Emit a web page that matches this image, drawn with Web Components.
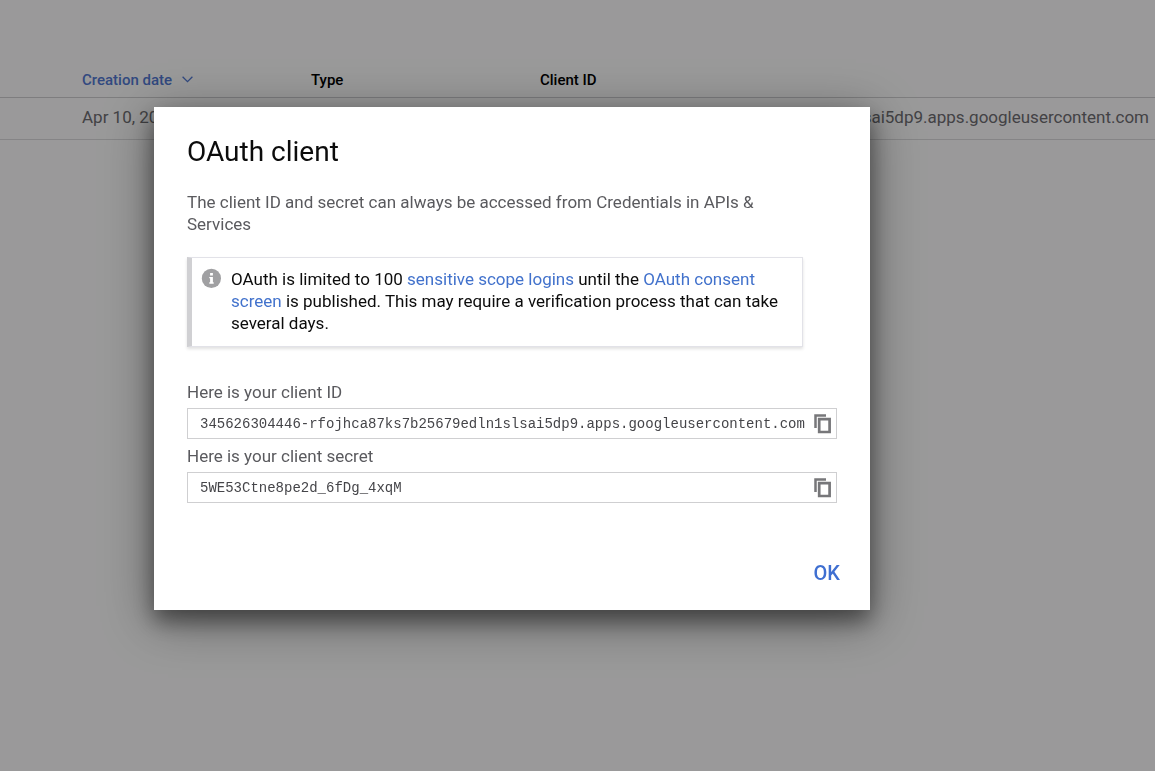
<!DOCTYPE html>
<html lang="en">
<head>
<meta charset="utf-8">
<meta name="viewport" content="width=device-width, initial-scale=1">
<title>OAuth client</title>
<style>
  html, body { margin: 0; height: 100%; }
  body { font: 17px/22px Roboto, sans-serif; color: #6e6e72; background: #fff; overflow: hidden; }
</style>
</head>
<body>
<credentials-page></credentials-page>

<template id="credentials-page">
  <style>
    :host { display: block; min-height: 100%; }
  </style>
  <credentials-table></credentials-table>
  <modal-overlay>
    <oauth-dialog>
      <span slot="title">OAuth client</span>
      <span slot="intro">The client ID and secret can always be accessed from Credentials in APIs &amp; Services</span>
      <info-callout></info-callout>
      <copy-field label="Here is your client ID" value="345626304446-rfojhca87ks7b25679edln1slsai5dp9.apps.googleusercontent.com"></copy-field>
      <copy-field label="Here is your client secret" value="5WE53Ctne8pe2d_6fDg_4xqM"></copy-field>
    </oauth-dialog>
  </modal-overlay>
</template>

<template id="credentials-table">
  <style>
    :host { display: block; padding-top: 62px; }
    table { width: 100%; border-collapse: separate; border-spacing: 0; table-layout: fixed; }
    .lead { width: 82px; }
    .col { width: 229px; }
    th, td { padding: 0; text-align: left; white-space: nowrap; }
    th { height: 35px; font-size: 15px; font-weight: 500; color: #000; border-bottom: 1px solid #d0d0d2; }
    td { height: 37px; padding-bottom: 4px; border-bottom: 1px solid #dcdcde; }
    .id { display: flex; justify-content: flex-end; padding-right: 6px; }
    th button { display: flex; align-items: center; gap: 10px; padding: 0; border: 0; background: none; font: inherit; color: #527ad4; cursor: pointer; }
  </style>
  <table>
    <colgroup><col class="lead"><col class="col"><col class="col"><col></colgroup>
    <thead>
      <tr>
        <th></th>
        <th scope="col" aria-sort="descending"><button type="button">Creation date<svg width="11" height="7" viewBox="0 0 11 7" fill="none" stroke="currentColor" stroke-width="1.3" aria-hidden="true"><path d="M.6.8 5.5 5.7 10.4.8"/></svg></button></th>
        <th scope="col">Type</th>
        <th scope="col">Client ID</th>
      </tr>
    </thead>
    <tbody>
      <tr>
        <td></td>
        <td>Apr 10, 2020</td>
        <td></td>
        <td><div class="id">345626304446-rfojhca87ks7b25679edln1slsai5dp9.apps.googleusercontent.com</div></td>
      </tr>
    </tbody>
  </table>
</template>

<template id="modal-overlay">
  <style>
    :host { position: fixed; inset: 0; display: flex; align-items: flex-start; box-sizing: border-box;
      padding: 107px 24px 24px 154px; background: rgba(2, 0, 2, .4); }
  </style>
  <slot></slot>
</template>

<template id="oauth-dialog">
  <style>
    :host { display: block; flex: 0 1 716px; box-sizing: border-box; padding: 29px 33px 19px; background: #fff; color: #5a5a5e;
      box-shadow: 0 11px 20px rgba(0, 0, 0, .4), 0 10px 46px 2px rgba(0, 0, 0, .4); }
    h1 { margin: 0; font-size: 28px; line-height: 32px; font-weight: 400; color: #0c0c0c; }
    p { margin: 23px 34px 22px 0; }
    footer { display: flex; justify-content: flex-end; margin-top: 52px; }
    button { margin-right: -11px; padding: 6px 8px; border: 0; background: none; font: 500 20px/24px Roboto, sans-serif; color: #3f6fd1; cursor: pointer; }
  </style>
  <section role="dialog" aria-modal="true" aria-labelledby="heading">
    <h1 id="heading"><slot name="title"></slot></h1>
    <p><slot name="intro"></slot></p>
    <slot></slot>
    <footer><button type="button">OK</button></footer>
  </section>
</template>

<template id="info-callout">
  <style>
    :host { display: flex; align-items: flex-start; gap: 10px; margin: 0 34px 34px 0; padding: 10px 16px 12px 9px;
      border: 1px solid #e2e2e8; border-left: 5px solid #d0d0d3; box-shadow: 0 2px 3px rgba(0, 0, 0, .12); color: #0c0c0c; }
    svg { flex: none; }
    p { margin: 0; }
    a { color: #4272cc; text-decoration: none; }
  </style>
  <svg width="20" height="20" viewBox="0 0 20 20" role="img" aria-label="Info"><circle cx="10.400" cy="10.400" r="9.600" fill="#a0a0a2"/><path d="M9.100 5h2.800v2.600H9.100zM8.300 8.900h3.600v5.400h.8v1.500H8.300v-1.500h.8v-4h-.8z" fill="#fff"/></svg>
  <p>OAuth is limited to 100 <a href="#scopes">sensitive scope logins</a> until the <a href="#consent">OAuth consent screen</a> is published. This may require a verification process that can take several days.</p>
</template>

<template id="copy-field">
  <style>
    :host { display: block; margin-bottom: 6px; }
    label { display: block; margin-bottom: 5px; }
    .box { display: flex; align-items: center; height: 29px; border: 1px solid #cfcfd1; }
    input { flex: 1; min-width: 0; height: 29px; box-sizing: border-box; padding: 0 0 0 12px; border: 0; outline: 0; background: none;
      font: 14px/22px "Liberation Mono", monospace; color: #454549; }
    button { flex: none; display: flex; padding: 0 4px 0 8px; border: 0; background: none; color: #77777a; cursor: pointer; }
  </style>
  <label for="value"></label>
  <div class="box">
    <input id="value" type="text" readonly>
    <button type="button" aria-label="Copy"><svg width="18" height="20" viewBox="0 0 18 20" fill="none" stroke="currentColor" aria-hidden="true"><path stroke-width="2.500" d="M1.500 14V1.500H12"/><path stroke-width="2.700" d="M5.200 5.200H15.600V18H5.200z"/></svg></button>
  </div>
</template>

<script>
  class TemplateElement extends HTMLElement {
    constructor() {
      super();
      const template = document.getElementById(this.localName);
      this.attachShadow({ mode: 'open' }).append(template.content.cloneNode(true));
    }
  }

  class CopyField extends TemplateElement {
    connectedCallback() {
      const input = this.shadowRoot.querySelector('input');
      this.shadowRoot.querySelector('label').textContent = this.getAttribute('label');
      input.value = this.getAttribute('value');
      this.shadowRoot.querySelector('button').onclick = () => {
        input.select();
        document.execCommand('copy');
      };
    }
  }

  class OauthDialog extends TemplateElement {
    connectedCallback() {
      this.shadowRoot.querySelector('button').onclick = () => this.parentElement.remove();
    }
  }

  customElements.define('copy-field', CopyField);
  customElements.define('info-callout', class extends TemplateElement {});
  customElements.define('oauth-dialog', OauthDialog);
  customElements.define('modal-overlay', class extends TemplateElement {});
  customElements.define('credentials-table', class extends TemplateElement {});
  customElements.define('credentials-page', class extends TemplateElement {});
</script>
</body>
</html>
